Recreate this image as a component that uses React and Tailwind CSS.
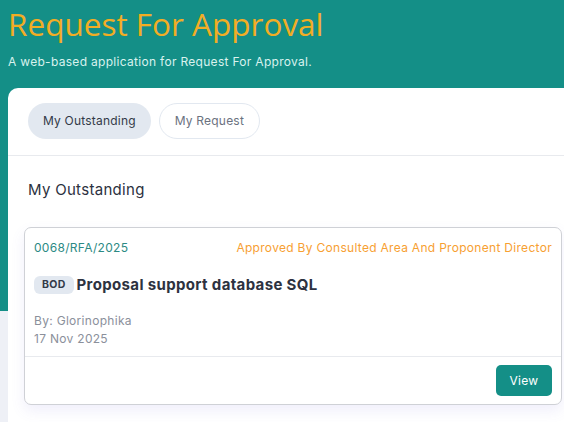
export default function App() {
  const body = { fontFamily: '"Inter", "Noto Sans", sans-serif' };
  return (
    <div
      className="min-h-screen w-full overflow-hidden tracking-[0.3px] bg-[linear-gradient(to_bottom,#148f87_311px,#eef0f6_311px)]"
      style={body}
    >
      <header className="px-2 pt-[4px] h-[88px]">
        <h1
          className="text-[31.5px] leading-[40px] tracking-normal text-[#f2ad24] font-normal"
          style={{ fontFamily: '"Open Sans", "Noto Sans", sans-serif' }}
        >
          Request For Approval
        </h1>
        <p className="mt-[10px] text-[12px] leading-[16px] text-[#d9f2ee]">
          A web-based application for Request For Approval.
        </p>
      </header>

      <main className="ml-2 mr-[-12px] bg-white rounded-tl-[10px] min-h-[334px]">
        <div className="flex gap-2 px-5 pt-[15px] pb-4 border-b border-[#e8eaee] tracking-[0.2px]">
          <button className="h-9 px-[15px] rounded-full bg-[#e2e8f0] text-[12px] text-[#333a48]">
            My Outstanding
          </button>
          <button className="h-9 px-[15px] rounded-full border border-[#e2e8f0] bg-white text-[12px] text-[#6b7280]">
            My Request
          </button>
        </div>

        <div className="pl-4 pr-[14px] pt-[22px]">
          <h2 className="px-1 text-[15px] leading-6 text-[#2c3140] font-normal">My Outstanding</h2>

          <div className="mt-[25px] border border-[#cfd1d6] rounded-[7px] bg-white shadow-[0_6px_14px_rgba(110,100,220,0.10)]">
            <div className="px-[9px] pt-[10px] pb-[8px]">
              <div className="flex items-center justify-between text-[12px] leading-5">
                <span className="text-[#2c8a84]">0068/RFA/2025</span>
                <span className="text-[#f7a032]">Approved By Consulted Area And Proponent Director</span>
              </div>
              <div className="mt-[15px] flex items-center gap-[3px]">
                <span className="px-[8px] h-[18px] flex items-center rounded-[6px] bg-[#e2e8f0] text-[10.5px] font-bold text-[#333a48]">
                  BOD
                </span>
                <span className="text-[15px] leading-6 font-bold tracking-[0.35px] text-[#2d3240]">
                  Proposal support database SQL
                </span>
              </div>
              <div className="mt-[15px] text-[12px] leading-[18px] text-[#8b909b]">
                <div>By: Glorinophika</div>
                <div>17 Nov 2025</div>
              </div>
            </div>
            <div className="border-t border-[#e8eaee] flex justify-end px-[9px] py-[8px]">
              <button className="h-[31px] w-[56px] rounded-[5px] bg-[#148f87] text-white text-[12px]">
                View
              </button>
            </div>
          </div>
        </div>
      </main>
    </div>
  );
}
